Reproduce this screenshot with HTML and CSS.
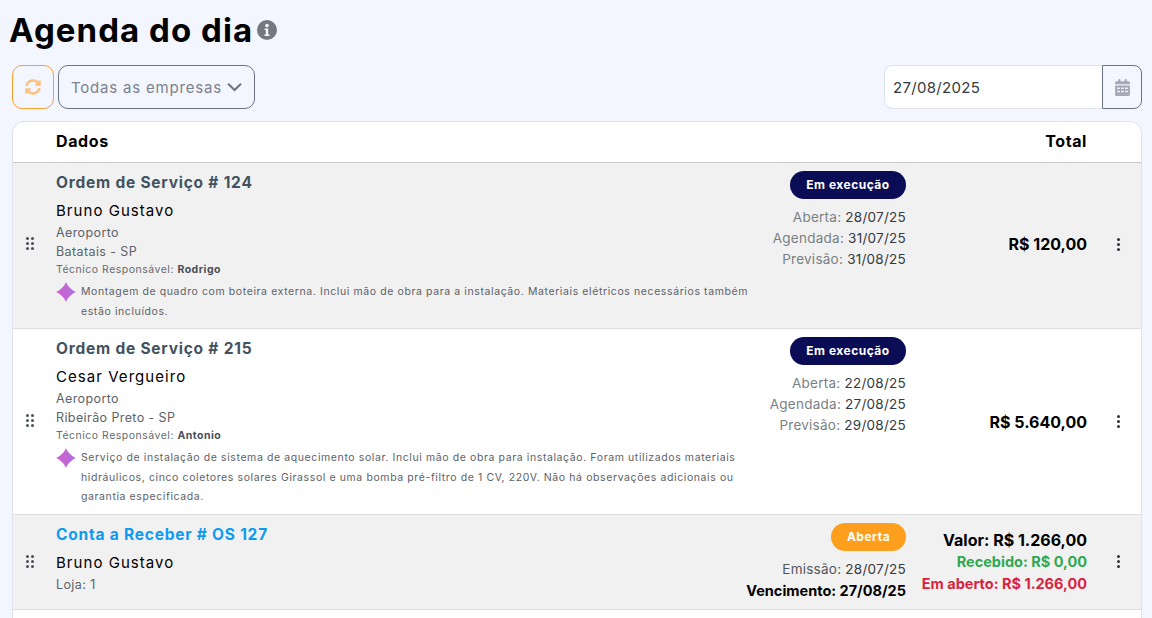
FILE: index.html
```html
<!DOCTYPE html>
<html lang="pt-BR">
<head>
  <meta charset="UTF-8">
  <meta name="viewport" content="width=device-width, initial-scale=1.0">
  <title>Agenda do dia</title>
  <link rel="stylesheet" href="styles.css">
</head>
<body>
  <svg class="svg-defs" width="0" height="0" aria-hidden="true">
    <defs>
      <linearGradient id="sparkFill" x1="0" y1="0.5" x2="1" y2="0.5">
        <stop offset="0" stop-color="#d55fcb"/>
        <stop offset="1" stop-color="#ad6fe0"/>
      </linearGradient>
    </defs>
  </svg>

  <div class="page">
    <div class="title-row">
      <h1>Agenda do dia</h1>
      <svg class="info-icon" viewBox="0 0 20 20" aria-hidden="true">
        <circle cx="10" cy="10" r="10" fill="#77777f"/>
        <circle cx="10" cy="5.6" r="1.8" fill="#f3f5ff"/>
        <path d="M7.6 8.4h3.6v6h1.3v1.6H7.5v-1.6h1.3v-4.4H7.6z" fill="#f3f5ff"/>
      </svg>
    </div>

    <div class="toolbar">
      <button class="refresh-btn" aria-label="Atualizar">
        <svg viewBox="0 0 512 512" width="16" height="16" fill="#fdc179" aria-hidden="true">
          <path d="M370.72 133.28C339.458 104.008 298.888 87.962 255.848 88c-77.458.068-144.328 53.178-162.791 126.85-1.344 5.363-6.122 9.15-11.651 9.15H24.103c-7.498 0-13.194-6.807-11.807-14.176C33.933 94.924 134.813 8 256 8c66.448 0 126.791 26.136 171.315 68.685L463.03 40.97C478.149 25.851 504 36.559 504 57.941V192c0 13.255-10.745 24-24 24H345.941c-21.382 0-32.09-25.851-16.971-40.971l41.75-41.749zM32 296h134.059c21.382 0 32.09 25.851 16.971 40.971l-41.75 41.75c31.262 29.273 71.835 45.319 114.876 45.28 77.418-.07 144.315-53.144 162.787-126.849 1.344-5.363 6.122-9.15 11.651-9.15h57.304c7.498 0 13.194 6.807 11.807 14.176C478.067 417.076 377.187 504 256 504c-66.448 0-126.791-26.136-171.315-68.685L48.97 471.03C33.851 486.149 8 475.441 8 454.059V320c0-13.255 10.745-24 24-24z"/>
        </svg>
      </button>
      <button class="company-select">
        <span>Todas as empresas</span>
        <svg viewBox="0 0 16 10" width="16" height="10" fill="none" stroke="#6c757d" stroke-width="2.2" aria-hidden="true">
          <path d="M1.2 1.5 8 8.2l6.8-6.7"/>
        </svg>
      </button>
      <div class="date-group">
        <div class="date-input">27/08/2025</div>
        <button class="date-btn" aria-label="Calendário">
          <svg viewBox="0 0 448 512" width="15" height="17" fill="#a6a8b6" aria-hidden="true">
            <path d="M96 32a32 32 0 0 1 64 0v32h128V32a32 32 0 0 1 64 0v32h48a48 48 0 0 1 48 48v48H0v-48a48 48 0 0 1 48-48h48zM0 192h448v272a48 48 0 0 1-48 48H48a48 48 0 0 1-48-48zm64 64v48h80v-48zm120 0v48h80v-48zm120 0v48h80v-48zM64 352v48h80v-48zm120 0v48h80v-48zm120 0v48h80v-48z" fill-rule="evenodd"/>
          </svg>
        </button>
      </div>
    </div>

    <div class="agenda-card">
      <div class="agenda-head">
        <span>Dados</span>
        <span class="head-total">Total</span>
      </div>

      <div class="agenda-row shaded row-os-1">
        <span class="grip"><i></i><i></i><i></i><i></i><i></i><i></i></span>
        <div class="row-data">
          <div class="row-title">Ordem de Serviço # 124</div>
          <div class="client">Bruno Gustavo</div>
          <div class="place">Aeroporto</div>
          <div class="place">Batatais - SP</div>
          <div class="tech">Técnico Responsável: <b>Rodrigo</b></div>
          <div class="summary">
            <svg class="spark" viewBox="0 0 20 20" aria-hidden="true"><path d="M10 0C11.5 4 15.5 8 20 10 15.5 12 11.5 16 10 20 8.5 16 4.5 12 0 10 4.5 8 8.5 4 10 0z" fill="url(#sparkFill)"/></svg>
            <p>Montagem de quadro com boteira externa. Inclui mão de obra para a instalação. Materiais elétricos necessários também estão incluídos.</p>
          </div>
        </div>
        <div class="row-status">
          <span class="badge navy">Em execução</span>
          <div class="dates">
            <div><em>Aberta:</em> 28/07/25</div>
            <div><em>Agendada:</em> 31/07/25</div>
            <div><em>Previsão:</em> 31/08/25</div>
          </div>
        </div>
        <div class="row-total">R$ 120,00</div>
        <span class="kebab"><i></i><i></i><i></i></span>
      </div>

      <div class="agenda-row row-os-2">
        <span class="grip"><i></i><i></i><i></i><i></i><i></i><i></i></span>
        <div class="row-data">
          <div class="row-title">Ordem de Serviço # 215</div>
          <div class="client">Cesar Vergueiro</div>
          <div class="place">Aeroporto</div>
          <div class="place">Ribeirão Preto - SP</div>
          <div class="tech">Técnico Responsável: <b>Antonio</b></div>
          <div class="summary">
            <svg class="spark" viewBox="0 0 20 20" aria-hidden="true"><path d="M10 0C11.5 4 15.5 8 20 10 15.5 12 11.5 16 10 20 8.5 16 4.5 12 0 10 4.5 8 8.5 4 10 0z" fill="url(#sparkFill)"/></svg>
            <p>Serviço de instalação de sistema de aquecimento solar. Inclui mão de obra para instalação. Foram utilizados materiais hidráulicos, cinco coletores solares Girassol e uma bomba pré-filtro de 1 CV, 220V. Não há observações adicionais ou garantia especificada.</p>
          </div>
        </div>
        <div class="row-status">
          <span class="badge navy">Em execução</span>
          <div class="dates">
            <div><em>Aberta:</em> 22/08/25</div>
            <div><em>Agendada:</em> 27/08/25</div>
            <div><em>Previsão:</em> 29/08/25</div>
          </div>
        </div>
        <div class="row-total">R$ 5.640,00</div>
        <span class="kebab"><i></i><i></i><i></i></span>
      </div>

      <div class="agenda-row shaded row-bill">
        <span class="grip"><i></i><i></i><i></i><i></i><i></i><i></i></span>
        <div class="row-data">
          <div class="row-title link">Conta a Receber # OS 127</div>
          <div class="client">Bruno Gustavo</div>
          <div class="place">Loja: 1</div>
        </div>
        <div class="row-status">
          <span class="badge orange">Aberta</span>
          <div class="dates bill-dates">
            <div><em>Emissão:</em> 28/07/25</div>
            <div class="due">Vencimento: 27/08/25</div>
          </div>
        </div>
        <div class="row-total bill-total">
          <div>Valor: R$ 1.266,00</div>
          <div class="paid">Recebido: R$ 0,00</div>
          <div class="open">Em aberto: R$ 1.266,00</div>
        </div>
        <span class="kebab"><i></i><i></i><i></i></span>
      </div>

      <div class="agenda-row row-next"></div>
    </div>
  </div>
</body>
</html>
```

FILE: styles.css
```css
html, body {
  height: 100%;
  overflow: hidden;
}

body {
  margin: 0;
  background: #f3f5ff;
  color: #000;
  font-family: Inter, "Noto Sans", Arial, sans-serif;
}

.svg-defs {
  display: block;
  height: 0;
}

.page {
  height: 100%;
  overflow: hidden;
  padding: 0 10px 0 12px;
}

.title-row {
  display: flex;
  align-items: center;
  height: 61px;
  margin-left: -3px;
}

h1 {
  margin: 0;
  font-size: 33px;
  font-weight: 700;
  letter-spacing: 1.05px;
  line-height: 61px;
}

.info-icon {
  width: 20px;
  height: 20px;
  margin: 0 0 2px 4px;
}

.toolbar {
  display: flex;
  align-items: stretch;
  gap: 4px;
  height: 44px;
  margin: 4px 0 12px;
}

.toolbar button {
  font-family: inherit;
  cursor: pointer;
}

.refresh-btn {
  width: 42px;
  padding: 0;
  border: 1px solid #fd9f2a;
  border-radius: 10px;
  background: transparent;
  display: flex;
  align-items: center;
  justify-content: center;
}

.company-select {
  display: flex;
  align-items: center;
  gap: 5px;
  width: 197px;
  padding: 0 12px;
  border: 1px solid #6c7285;
  border-radius: 10px;
  background: transparent;
  color: #7c828c;
  font-size: 15px;
  letter-spacing: 0.8px;
  white-space: nowrap;
}

.date-group {
  display: flex;
  margin-left: auto;
}

.date-input {
  display: flex;
  align-items: center;
  width: 218px;
  box-sizing: border-box;
  padding-left: 8px;
  border: 1px solid #dfe2ec;
  border-right: 0;
  border-radius: 8px 0 0 8px;
  background: #fff;
  color: #343a40;
  font-size: 15px;
  letter-spacing: 0.3px;
}

.date-btn {
  width: 40px;
  padding: 0;
  border: 1px solid #6c7285;
  border-radius: 0 8px 8px 0;
  background: transparent;
  display: flex;
  align-items: center;
  justify-content: center;
}

.agenda-card {
  border: 1px solid #dfe2ec;
  border-bottom: 0;
  border-radius: 12px 12px 0 0;
  background: #fff;
  overflow: hidden;
}

.agenda-head {
  display: flex;
  justify-content: space-between;
  align-items: center;
  box-sizing: border-box;
  height: 41px;
  padding: 0 54px 2px 43px;
  border-bottom: 1px solid #c9c9c9;
  font-size: 16px;
  font-weight: 700;
  letter-spacing: 0.6px;
}

.agenda-row {
  display: grid;
  grid-template-columns: 43px 1fr 145px 181px 54px;
  box-sizing: border-box;
  border-bottom: 1px solid #dedede;
  background: #fff;
}

.agenda-row.shaded {
  background: #f1f1f1;
}

.row-os-1 { height: 166px; }
.row-os-2 { height: 186px; }
.row-bill { height: 95px; }
.row-next { height: 40px; }

.grip {
  display: grid;
  grid-template-columns: 3px 3px;
  gap: 2px;
  align-content: center;
  padding: 0 0 2px 13px;
}

.row-os-1 .grip {
  padding-bottom: 5px;
}

.grip i {
  width: 3px;
  height: 3px;
  border-radius: 50%;
  background: #4a4f55;
}

.row-data {
  padding-top: 10px;
  min-width: 0;
}

.row-title {
  height: 20px;
  color: #43525f;
  font-size: 15.5px;
  font-weight: 700;
  line-height: 20px;
  letter-spacing: 0.78px;
}

.row-title.link {
  color: #0d9bf2;
}

.client {
  margin-top: 8px;
  font-size: 15px;
  line-height: 20px;
  letter-spacing: 1.05px;
}

.place {
  color: #5d6268;
  font-size: 12.5px;
  line-height: 18px;
  margin-top: 1px;
  letter-spacing: 0.4px;
}

.client + .place {
  margin-top: 3px;
}

.tech {
  color: #666b70;
  font-size: 10.5px;
  line-height: 18px;
  letter-spacing: 0.5px;
}

.tech b {
  color: #4a4f55;
}

.summary {
  display: flex;
  align-items: flex-start;
  margin-top: 3px;
}

.spark {
  flex: none;
  width: 20px;
  height: 20px;
}

.summary p {
  margin: 0 0 0 5px;
  color: #5d6268;
  font-size: 10.5px;
  line-height: 19.5px;
  letter-spacing: 0.6px;
}

.row-status {
  display: flex;
  flex-direction: column;
  align-items: flex-end;
  padding-top: 8px;
  white-space: nowrap;
}

.badge {
  display: flex;
  align-items: center;
  justify-content: center;
  box-sizing: border-box;
  height: 28px;
  padding-bottom: 1px;
  border-radius: 14px;
  color: #fff;
  font-size: 12px;
  font-weight: 700;
  letter-spacing: 0.5px;
}

.badge.navy {
  width: 116px;
  background: #0a0c55;
}

.badge.orange {
  width: 75px;
  background: #fd9f1c;
}

.dates {
  margin-top: 8px;
  color: #343a40;
  font-size: 13.5px;
  line-height: 21px;
  text-align: right;
  letter-spacing: 0.25px;
}

.dates em {
  color: #7a7f85;
  font-style: normal;
}

.bill-dates em {
  color: #52575c;
}

.due {
  color: #000;
  font-size: 14.5px;
  font-weight: 700;
  letter-spacing: 0;
}

.row-total {
  align-self: center;
  color: #000;
  font-size: 16px;
  font-weight: 700;
  text-align: right;
  white-space: nowrap;
}

.row-os-1 .row-total {
  padding-bottom: 3px;
}

.bill-total {
  font-size: 16px;
  line-height: 22px;
}

.paid {
  color: #2fa84f;
  font-size: 14.5px;
}

.open {
  color: #dc1f3f;
  font-size: 14.5px;
}

.kebab {
  display: flex;
  flex-direction: column;
  gap: 2px;
  align-items: center;
  justify-content: center;
  padding-left: 8px;
}

.row-os-1 .kebab {
  padding-bottom: 3px;
}

.row-bill .kebab {
  padding-bottom: 2px;
}

.kebab i {
  width: 3px;
  height: 3px;
  border-radius: 50%;
  background: #2f3338;
}
```
